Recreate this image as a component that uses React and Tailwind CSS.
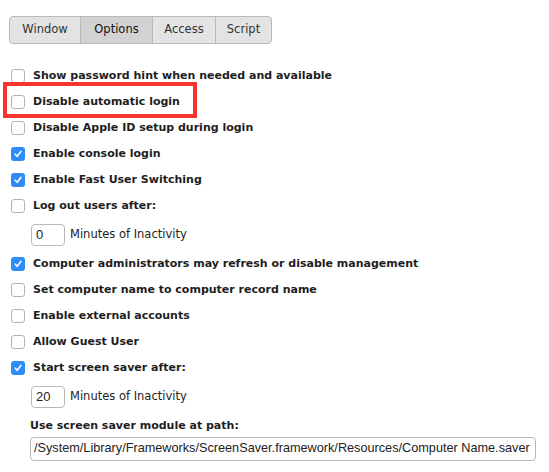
import { useState } from 'react'

const tabs = ['Window', 'Options', 'Access', 'Script']

const lucida = { fontFamily: '"DejaVu Sans", "Liberation Sans", sans-serif' }

function Check({ checked }) {
  return checked ? (
    <span className="flex h-[14px] w-[14px] shrink-0 items-center justify-center rounded-[3px] bg-[#2d8cf8]">
      <svg width="10" height="10" viewBox="0 0 10 10" fill="none">
        <path d="M2.2 5.2 L4.2 7.3 L7.9 2.4" stroke="white" strokeWidth="1.6" strokeLinecap="round" strokeLinejoin="round" />
      </svg>
    </span>
  ) : (
    <span className="h-[14px] w-[14px] shrink-0 rounded-[3px] border border-[#b3b3b3] bg-white" />
  )
}

function Row({ checked, children }) {
  return (
    <div className="flex h-[26px] items-center gap-2 pl-[11px]">
      <Check checked={checked} />
      <span className="text-[11px] font-bold text-[#1e1e1e]">{children}</span>
    </div>
  )
}

function Minutes({ value }) {
  return (
    <div className="flex h-[32px] items-center gap-[5px] pl-[31px]">
      <div
        className="flex h-[22px] w-[34px] items-center rounded-[4px] border border-[#b8b8b8] bg-white pl-[4px] text-[13px] text-[#222]"
        style={{ fontFamily: '"Liberation Sans", Arial, sans-serif' }}
      >
        {value}
      </div>
      <span className="text-[11.5px] text-[#222]">Minutes of Inactivity</span>
    </div>
  )
}

export default function App() {
  const [tab, setTab] = useState('Options')
  return (
    <div className="relative h-[472px] w-[549px] bg-white" style={lucida}>
      <div className="px-[9px] pt-[16px]">
        <div className="flex h-[28px] w-[263px] overflow-hidden rounded-[4px] border border-[#b9b9b9] bg-[#e3e3e3]">
          {tabs.map((t, i) => (
            <button
              key={t}
              type="button"
              onClick={() => setTab(t)}
              className={[
                'flex items-center justify-center text-[11.5px]',
                i > 0 ? 'border-l border-[#b9b9b9]' : '',
                t === tab ? 'bg-[#d2d2d2] text-[#111]' : 'text-[#333]',
                i === 0 ? 'w-[70px]' : i === 1 ? 'w-[72px]' : i === 2 ? 'w-[63px]' : 'flex-1',
              ].join(' ')}
            >
              {t}
            </button>
          ))}
        </div>
      </div>

      <div className="pt-[19px]">
        <Row>Show password hint when needed and available</Row>
        <Row>Disable automatic login</Row>
        <Row>Disable Apple ID setup during login</Row>
        <Row checked>Enable console login</Row>
        <Row checked>Enable Fast User Switching</Row>
        <Row>Log out users after:</Row>
        <Minutes value="0" />
        <Row checked>Computer administrators may refresh or disable management</Row>
        <Row>Set computer name to computer record name</Row>
        <Row>Enable external accounts</Row>
        <Row>Allow Guest User</Row>
        <Row checked>Start screen saver after:</Row>
        <Minutes value="20" />
        <div className="pl-[30px] pt-[5px]">
          <div className="text-[11px] font-bold leading-[16px] text-[#1e1e1e]">Use screen saver module at path:</div>
          <div
            className="mt-[3px] flex h-[24px] w-[506px] items-center overflow-hidden whitespace-nowrap rounded-[4px] border border-[#b8b8b8] bg-white pl-[3px] text-[12.7px] text-[#222]"
            style={{ fontFamily: '"Liberation Sans", Arial, sans-serif' }}
          >
            /System/Library/Frameworks/ScreenSaver.framework/Resources/Computer Name.saver
          </div>
        </div>
      </div>

      <div className="pointer-events-none absolute left-[3px] top-[82px] h-[36px] w-[194px] border-4 border-[#f5352f]" />
    </div>
  )
}
